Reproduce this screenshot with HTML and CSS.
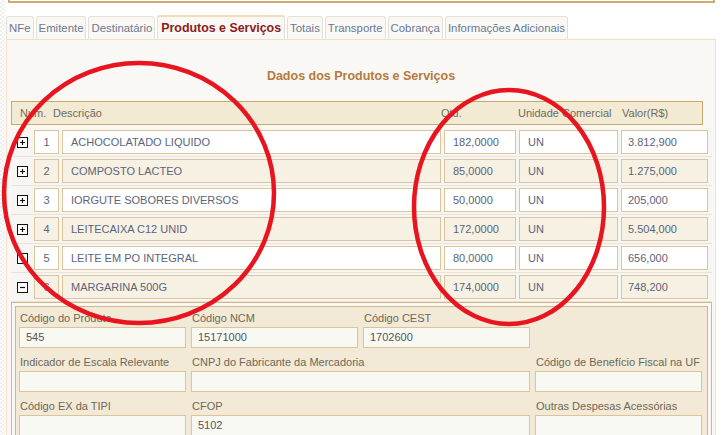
FILE: index.html
```html
<!DOCTYPE html>
<html lang="pt-BR">
<head>
    <meta charset="UTF-8">
    <title>NF-e - Produtos e Serviços</title>
    <link rel="stylesheet" href="styles.css">
</head>
<body>
    <div class="page">
        <div class="top-box"></div>

        <div class="tabs">
            <div class="tab">NFe</div>
            <div class="tab">Emitente</div>
            <div class="tab">Destinatário</div>
            <div class="tab active">Produtos e Serviços</div>
            <div class="tab">Totais</div>
            <div class="tab">Transporte</div>
            <div class="tab">Cobrança</div>
            <div class="tab">Informações Adicionais</div>
        </div>

        <div class="panel">
            <h2 class="panel-title">Dados dos Produtos e Serviços</h2>

            <div class="grid-head">
                <span class="h-num">Num.</span>
                <span class="h-desc">Descrição</span>
                <span class="h-qtd">Qtd.</span>
                <span class="h-un">Unidade Comercial</span>
                <span class="h-val">Valor(R$)</span>
            </div>

            <div class="items">
                <div class="item">
                    <svg class="toggle" width="11" height="11" viewBox="0 0 11 11"><rect x="0.5" y="0.5" width="10" height="10"/><path d="M3 5.5h5M5.5 3v5"/></svg>
                    <span class="cell num">1</span>
                    <span class="cell">ACHOCOLATADO LIQUIDO</span>
                    <span class="cell">182,0000</span>
                    <span class="cell">UN</span>
                    <span class="cell val">3.812,900</span>
                </div>
                <div class="item alt">
                    <svg class="toggle" width="11" height="11" viewBox="0 0 11 11"><rect x="0.5" y="0.5" width="10" height="10"/><path d="M3 5.5h5M5.5 3v5"/></svg>
                    <span class="cell num">2</span>
                    <span class="cell">COMPOSTO LACTEO</span>
                    <span class="cell">85,0000</span>
                    <span class="cell">UN</span>
                    <span class="cell val">1.275,000</span>
                </div>
                <div class="item">
                    <svg class="toggle" width="11" height="11" viewBox="0 0 11 11"><rect x="0.5" y="0.5" width="10" height="10"/><path d="M3 5.5h5M5.5 3v5"/></svg>
                    <span class="cell num">3</span>
                    <span class="cell">IORGUTE SOBORES DIVERSOS</span>
                    <span class="cell">50,0000</span>
                    <span class="cell">UN</span>
                    <span class="cell val">205,000</span>
                </div>
                <div class="item alt">
                    <svg class="toggle" width="11" height="11" viewBox="0 0 11 11"><rect x="0.5" y="0.5" width="10" height="10"/><path d="M3 5.5h5M5.5 3v5"/></svg>
                    <span class="cell num">4</span>
                    <span class="cell">LEITECAIXA C12 UNID</span>
                    <span class="cell">172,0000</span>
                    <span class="cell">UN</span>
                    <span class="cell val">5.504,000</span>
                </div>
                <div class="item">
                    <svg class="toggle" width="11" height="11" viewBox="0 0 11 11"><rect x="0.5" y="0.5" width="10" height="10"/><path d="M3 5.5h5M5.5 3v5"/></svg>
                    <span class="cell num">5</span>
                    <span class="cell">LEITE EM PO INTEGRAL</span>
                    <span class="cell">80,0000</span>
                    <span class="cell">UN</span>
                    <span class="cell val">656,000</span>
                </div>
                <div class="item alt">
                    <svg class="toggle" width="11" height="11" viewBox="0 0 11 11"><rect x="0.5" y="0.5" width="10" height="10"/><path d="M3 5.5h5"/></svg>
                    <span class="cell num">6</span>
                    <span class="cell">MARGARINA 500G</span>
                    <span class="cell">174,0000</span>
                    <span class="cell">UN</span>
                    <span class="cell val">748,200</span>
                </div>
            </div>

            <div class="detail">
                <div class="detail-inner">
                    <div class="field">
                        <label>Código do Produto</label>
                        <div class="box">545</div>
                    </div>
                    <div class="field">
                        <label>Código NCM</label>
                        <div class="box">15171000</div>
                    </div>
                    <div class="field">
                        <label>Código CEST</label>
                        <div class="box">1702600</div>
                    </div>
                    <div class="field"></div>

                    <div class="field">
                        <label>Indicador de Escala Relevante</label>
                        <div class="box"></div>
                    </div>
                    <div class="field wide">
                        <label>CNPJ do Fabricante da Mercadoria</label>
                        <div class="box"></div>
                    </div>
                    <div class="field">
                        <label>Código de Benefício Fiscal na UF</label>
                        <div class="box"></div>
                    </div>

                    <div class="field">
                        <label>Código EX da TIPI</label>
                        <div class="box"></div>
                    </div>
                    <div class="field wide">
                        <label>CFOP</label>
                        <div class="box">5102</div>
                    </div>
                    <div class="field">
                        <label>Outras Despesas Acessórias</label>
                        <div class="box"></div>
                    </div>
                </div>
            </div>
        </div>
    </div>

    <!-- marcações em vermelho feitas sobre a captura -->
    <svg class="marks" width="723" height="435" viewBox="0 0 723 435">
        <ellipse cx="139" cy="193" rx="135" ry="130" />
        <ellipse cx="509" cy="207" rx="95" ry="117" />
    </svg>
</body>
</html>
```

FILE: styles.css
```css
body {
    margin: 0;
    height: 435px;
    overflow: hidden;
    font-family: "Liberation Sans", Arial, sans-serif;
    background-color: #fff;
    background-image: repeating-conic-gradient(#eeeeee 0 25%, #ffffff 0 50%);
    background-size: 4px 4px;
}

.page {
    margin-left: 5px;
    height: 435px;
    background: #fff;
}

.top-box {
    margin: 0 8px 0 3px;
    height: 1px;
    border: 2px solid #cbad74;
    border-top: none;
}

/* abas */
.tabs {
    display: flex;
    align-items: flex-end;
    gap: 2px;
    margin-top: 12px;
    padding-left: 1px;
}

.tab {
    height: 22px;
    line-height: 23px;
    padding: 0 2px;
    border: 1px solid #e6e0d3;
    border-bottom: none;
    border-radius: 3px 3px 0 0;
    background: #f9f8f4;
    color: #6b7894;
    font-size: 11.4px;
    white-space: nowrap;
}

.tab.active {
    height: 22px;
    border-top: 2px solid #f3dcb6;
    color: #8a1c1c;
    font-weight: bold;
    font-size: 12.4px;
    padding: 0 3px;
}

.panel {
    margin-left: 1px;
    width: 708px;
    height: 400px;
    border: 1px solid #f3dfc3;
    border-bottom: none;
    background: #f9f8f4;
}

.panel-title {
    margin: 0;
    padding-top: 29px;
    height: 32px;
    text-align: center;
    font-size: 12.5px;
    font-weight: bold;
    color: #b47b3d;
}

/* cabecalho da lista */
.grid-head {
    position: relative;
    margin-left: 4px;
    width: 690px;
    height: 22px;
    border: 1px solid #caa86c;
    background: #f3ead3;
    color: #6e6a62;
    font-size: 11px;
    line-height: 22px;
}

.grid-head span {
    position: absolute;
    top: 0;
}

.h-num { left: 8px; }
.h-desc { left: 41px; }
.h-qtd { left: 429px; }
.h-un { left: 506px; }
.h-val { left: 610px; }

/* itens */
.items {
    margin-top: 3px;
    margin-left: 4px;
    width: 701px;
}

.item {
    display: grid;
    grid-template-columns: 20px 25px 379px 72px 99px 87px;
    column-gap: 3px;
    align-items: center;
    padding: 2px 0;
    border-bottom: 1px solid #e7e4de;
    background: #f7f6f2;
}

.toggle {
    justify-self: center;
    margin-left: 2px;
}

.toggle rect {
    fill: #fff;
    stroke: #111;
}

.toggle path {
    stroke: #111;
    stroke-width: 1.2;
}

.cell {
    box-sizing: border-box;
    height: 24px;
    line-height: 22px;
    padding-left: 8px;
    border: 1px solid #dcc59d;
    background: #fff;
    color: #5c6479;
    font-size: 11px;
    white-space: nowrap;
    overflow: hidden;
}

.cell.num {
    padding-left: 0;
    text-align: center;
}

.cell.val {
    padding-left: 6px;
}

.item.alt .cell {
    background: #f7f1e4;
}

/* detalhe do item aberto */
.detail {
    margin-left: 4px;
    width: 693px;
    height: 140px;
    padding: 3px;
    border: 1px solid #d3b784;
    border-bottom: none;
}

.detail-inner {
    display: grid;
    grid-template-columns: repeat(4, 167px);
    align-content: start;
    column-gap: 5px;
    row-gap: 7px;
    height: 140px;
    padding: 4px 1px 0 3px;
    border: 1px solid #d3b784;
    border-bottom: none;
    background: #f2ead6;
}

.field.wide {
    grid-column: span 2;
}

.field label {
    display: block;
    height: 16px;
    line-height: 15px;
    padding-left: 1px;
    font-size: 11px;
    color: #6f6757;
}

.box {
    box-sizing: border-box;
    height: 21px;
    line-height: 19px;
    padding-left: 6px;
    border: 1px solid #dbc49c;
    background: #f9f9f3;
    color: #555;
    font-size: 11px;
}

.marks {
    position: absolute;
    top: 0;
    left: 0;
    pointer-events: none;
}

.marks ellipse {
    fill: none;
    stroke: #e8141f;
    stroke-width: 4.5;
}
```
